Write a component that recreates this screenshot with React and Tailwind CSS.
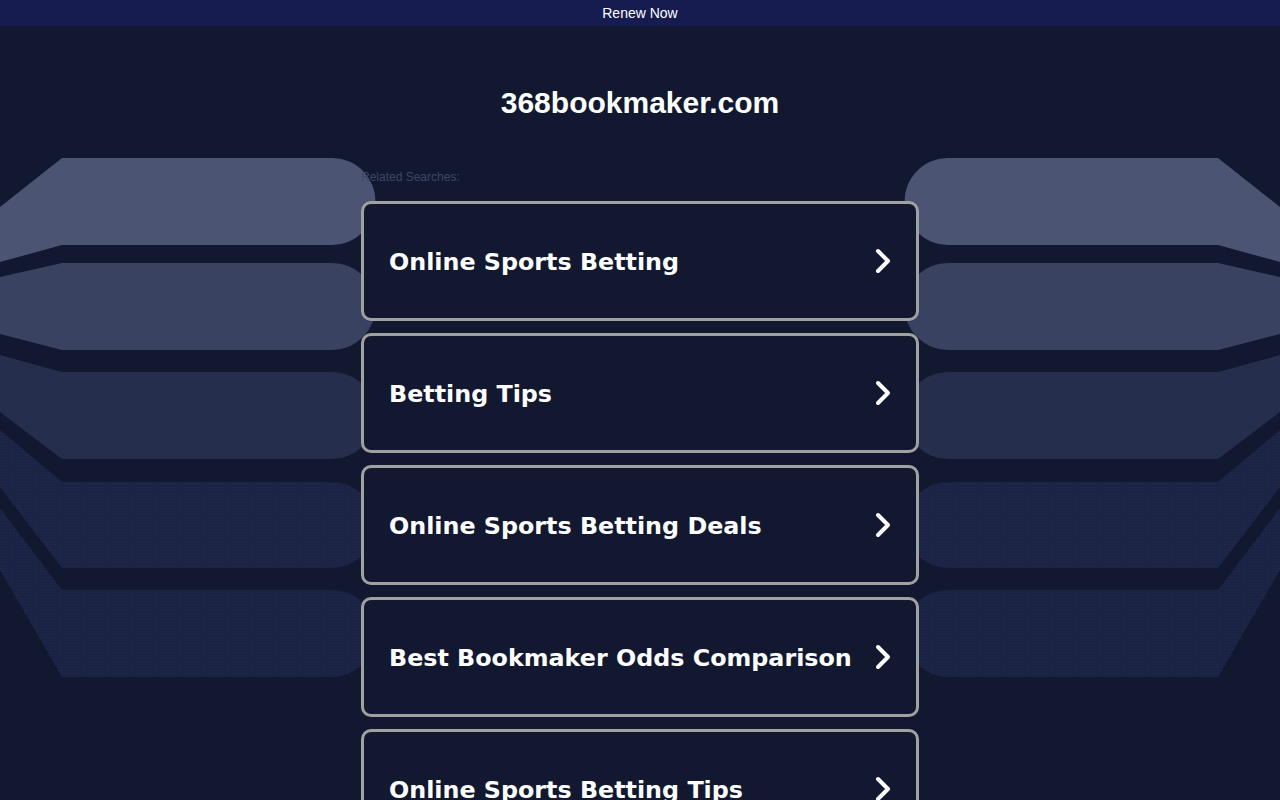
const searches = [
  'Online Sports Betting',
  'Betting Tips',
  'Online Sports Betting Deals',
  'Best Bookmaker Odds Comparison',
  'Online Sports Betting Tips',
]

// left-side bands, right side is mirrored
const bands = [
  { d: 'M0 207 L62 158 H332 A43.5 43.5 0 0 1 332 245 H62 L0 262 Z', fill: '#4b5573' },
  { d: 'M0 277 L62 263 H332 A43.5 43.5 0 0 1 332 350 H62 L0 334 Z', fill: '#3a4261' },
  { d: 'M0 355 L62 372 H332 A43.5 43.5 0 0 1 332 459 H62 L0 412 Z', fill: '#262e4d' },
  { d: 'M0 430 L62 482 H332 A43 43 0 0 1 332 568 H62 L0 487 Z', fill: '#1c2445', dots: true },
  { d: 'M0 508 L62 590 H332 A43.5 43.5 0 0 1 332 677 H62 L0 570 Z', fill: '#1b2344', dots: true },
]

function Backdrop() {
  const shapes = (
    <>
      {bands.map((b, i) => (
        <g key={i}>
          <path d={b.d} fill={b.fill} />
          {b.dots ? <path d={b.d} fill="url(#dots)" /> : null}
        </g>
      ))}
    </>
  )
  return (
    <svg
      className="pointer-events-none absolute inset-0 h-[800px] w-[1280px]"
      viewBox="0 0 1280 800"
      aria-hidden="true"
    >
      <defs>
        <pattern id="dots" width="3" height="3" patternUnits="userSpaceOnUse">
          <rect x="1" y="1" width="1" height="1" fill="#283256" opacity="0.5" />
        </pattern>
      </defs>
      {shapes}
      <g transform="matrix(-1 0 0 1 1280 0)">{shapes}</g>
    </svg>
  )
}

function Chevron() {
  return (
    <svg width="18" height="28" viewBox="0 0 18 28" fill="none" aria-hidden="true">
      <polyline
        points="4,4 14,14 4,24"
        stroke="white"
        strokeWidth="4"
        strokeLinecap="round"
        strokeLinejoin="round"
      />
    </svg>
  )
}

export default function App() {
  return (
    <div className="relative h-[800px] w-full overflow-hidden bg-[#111830] font-['Liberation_Sans',Arial,sans-serif]">
      <div className="relative z-10 flex h-[26px] items-center justify-center bg-[#161b50] text-[14px] text-white">
        Renew Now
      </div>

      <Backdrop />

      <main className="relative z-10 mx-auto flex w-[558px] flex-col">
        <h1 className="mt-[60px] text-center text-[30px] leading-[34px] font-bold text-white">
          368bookmaker.com
        </h1>

        <p className="mt-[50px] text-[12px] leading-[14px] text-[#3e4665]">Related Searches:</p>

        <div className="mt-[17px] flex flex-col gap-3">
          {searches.map((label) => (
            <a
              key={label}
              href="#"
              className="flex h-[120px] shrink-0 items-center justify-between rounded-[10px] border-[3px] border-[#a1a1a1] bg-[#111830] pr-[24px] pl-[25px]"
            >
              <span className="pt-[4px] font-['DejaVu_Sans',Verdana,sans-serif] text-[23.8px] font-bold whitespace-nowrap text-white">
                {label}
              </span>
              <Chevron />
            </a>
          ))}
        </div>
      </main>
    </div>
  )
}
